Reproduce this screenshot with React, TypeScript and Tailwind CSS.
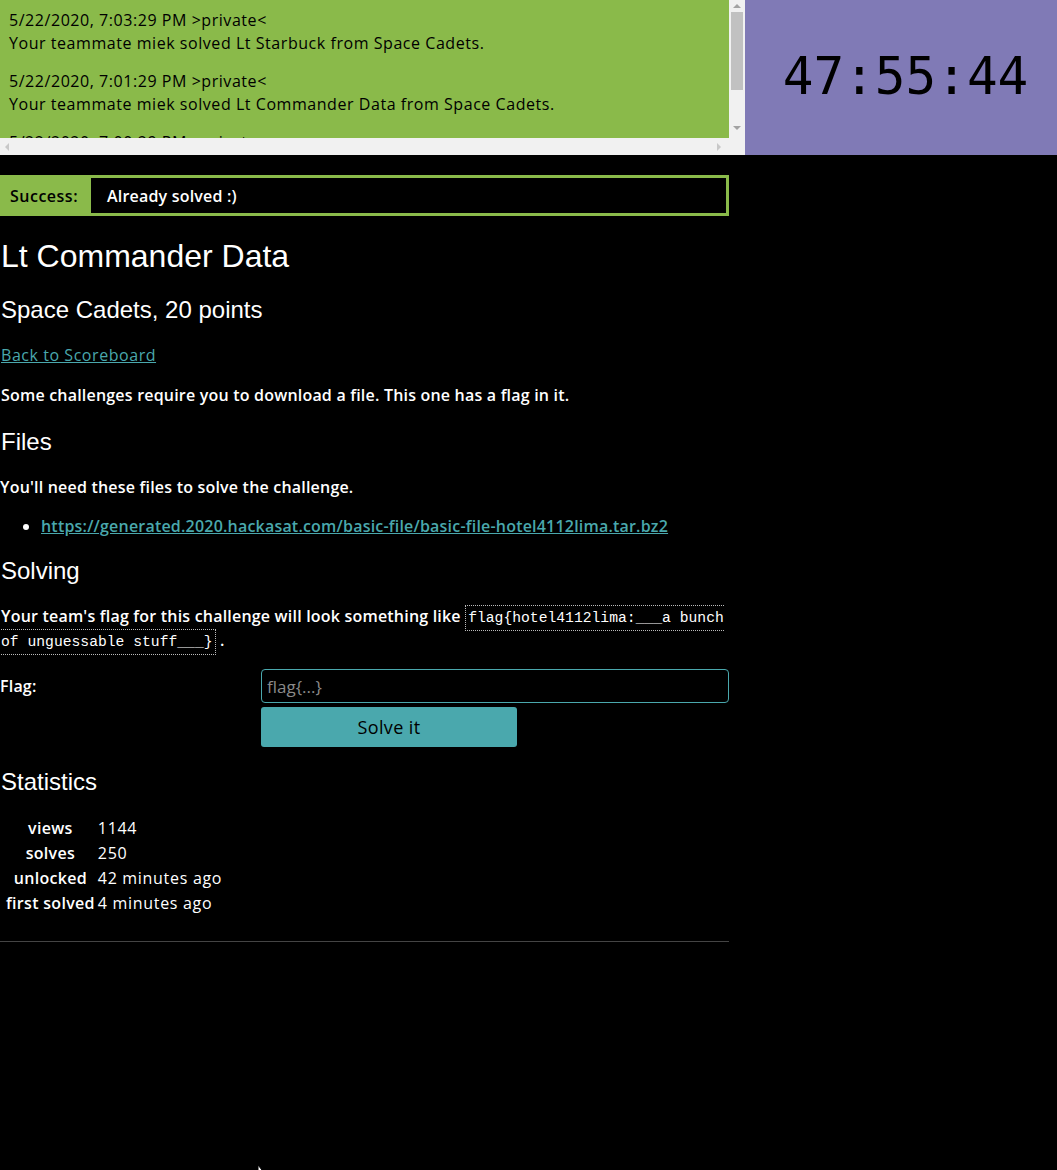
import React from "react";

const BODY = { fontFamily: "'Open Sans', Lato, sans-serif" };
const HEAD = { fontFamily: "'Liberation Sans', Arial, sans-serif" };

const messages = [
  { when: "5/22/2020, 7:03:29 PM", text: "Your teammate miek solved Lt Starbuck from Space Cadets." },
  { when: "5/22/2020, 7:01:29 PM", text: "Your teammate miek solved Lt Commander Data from Space Cadets." },
  { when: "5/22/2020, 7:00:29 PM", text: "Your teammate miek solved Basic File from Space Cadets." },
];

const stats = [
  ["views", "1144"],
  ["solves", "250"],
  ["unlocked", "42 minutes ago"],
  ["first solved", "4 minutes ago"],
];

// ── top bar: message log + countdown ──
function TopBar() {
  return (
    <div className="flex h-[155px]">
      <div className="relative w-[745px] h-[155px] bg-[#f1f1f1]">
        <div className="absolute left-0 top-0 w-[729px] h-[138px] overflow-hidden bg-[#8aba4a] text-black text-[16px] leading-[23px] tracking-[0.55px]">
          <div className="pt-[9px] pl-[9px]">
            {messages.map((m) => (
              <div key={m.when} className="mb-[15px]">
                <div>{m.when} &gt;private&lt;</div>
                <div>{m.text}</div>
              </div>
            ))}
          </div>
        </div>
        {/* vertical scrollbar */}
        <div className="absolute left-[729px] top-0 w-[16px] h-[138px] bg-[#f1f1f1]">
          <div className="absolute left-[4px] top-[4px] w-0 h-0 border-x-[4px] border-x-transparent border-b-[4px] border-b-[#a3a3a3]" />
          <div className="absolute left-[2px] top-[12px] w-[12px] h-[78px] bg-[#c1c1c1]" />
          <div className="absolute left-[4px] top-[126px] w-0 h-0 border-x-[4px] border-x-transparent border-t-[4px] border-t-[#a3a3a3]" />
        </div>
        {/* horizontal scrollbar */}
        <div className="absolute left-0 top-[138px] w-[729px] h-[17px] bg-[#f1f1f1]">
          <div className="absolute left-[5px] top-[5px] w-0 h-0 border-y-[4px] border-y-transparent border-r-[4px] border-r-[#c8c8c8]" />
          <div className="absolute left-[717px] top-[5px] w-0 h-0 border-y-[4px] border-y-transparent border-l-[4px] border-l-[#c8c8c8]" />
        </div>
      </div>
      <div className="flex-1 bg-[#807ab6] flex items-center justify-center pl-[9px]">
        <span className="text-[51px] text-black" style={{ fontFamily: "'DejaVu Sans Mono', monospace" }}>
          47:55:44
        </span>
      </div>
    </div>
  );
}

export default function App() {
  return (
    <div className="relative min-h-[1170px] overflow-hidden bg-black text-white" style={BODY}>
      <TopBar />

      <div className="w-[729px] pt-[20px]">
        {/* alert */}
        <div className="flex h-[41px] border-[3px] border-[#8aba4a] bg-black">
          <div className="w-[88px] bg-[#8aba4a] flex items-center pl-[7px] text-[16px] font-semibold tracking-[0.5px] text-black">
            Success:
          </div>
          <div className="flex items-center pl-[16px] text-[16px] font-semibold tracking-[0.2px] text-white">
            Already solved :)
          </div>
        </div>

        <h1 className="mt-[22px] pl-[1px] text-[32px] leading-[37px]" style={HEAD}>
          Lt Commander Data
        </h1>
        <h2 className="mt-[21px] pl-[1px] text-[24px] leading-[28px]" style={HEAD}>
          Space Cadets, 20 points
        </h2>

        <p className="mt-[20px] pl-[1px] text-[16px] leading-[22px] tracking-[0.55px]">
          <a href="#" className="text-[#4aa8ad] underline">Back to Scoreboard</a>
        </p>
        <p className="mt-[18px] pl-[1px] text-[16px] leading-[22px] font-semibold tracking-[0.2px]">
          Some challenges require you to download a file. This one has a flag in it.
        </p>

        <h2 className="mt-[22px] pl-[1px] text-[24px] leading-[28px]" style={HEAD}>
          Files
        </h2>
        <p className="mt-[20px] text-[16px] leading-[22px] font-semibold tracking-[0.2px]">
          You'll need these files to solve the challenge.
        </p>
        <ul className="mt-[17px] pl-[41px] list-disc text-[16px] leading-[22px] font-semibold tracking-[0.2px]">
          <li>
            <a href="#" className="text-[#4aa8ad] underline">
              https://generated.2020.hackasat.com/basic-file/basic-file-hotel4112lima.tar.bz2
            </a>
          </li>
        </ul>

        <h2 className="mt-[20px] pl-[1px] text-[24px] leading-[28px]" style={HEAD}>
          Solving
        </h2>
        <p className="mt-[19px] pl-[1px] text-[16px] leading-[24px] font-semibold tracking-[0.2px]">
          Your team's flag for this challenge will look something like{" "}
          <code
            className="border border-dotted border-[#bbbbbb] px-[2px] py-[4px] text-[14.7px] leading-[16px] font-normal tracking-normal"
            style={{ fontFamily: "'Liberation Mono', monospace" }}
          >
            flag{"{"}hotel4112lima:___a bunch of unguessable stuff___{"}"}
          </code>{" "}
          .
        </p>

        {/* flag form */}
        <div className="mt-[17px] flex">
          <label className="w-[261px] pt-[6px] text-[16px] leading-[22px] font-semibold tracking-[0.2px]">Flag:</label>
          <div className="flex-1 flex flex-col gap-[4px]">
            <input
              placeholder="flag{...}"
              className="h-[34px] w-full rounded-[4px] border border-[#4aa8ad] bg-black px-[5px] text-[17px] text-white placeholder:text-[#8a8a8a] outline-none"
              style={BODY}
            />
            <button
              className="h-[40px] w-[256px] rounded-[3px] bg-[#4aa8ad] text-[18px] tracking-[0.4px] text-black"
              style={BODY}
            >
              Solve it
            </button>
          </div>
        </div>

        <h2 className="mt-[21px] pl-[1px] text-[24px] leading-[28px]" style={HEAD}>
          Statistics
        </h2>
        <table className="mt-[19px] ml-[4px] text-[16px] leading-[21px] border-separate border-spacing-[2px]">
          <tbody>
            {stats.map(([k, v]) => (
              <tr key={k} className="h-[23px]">
                <th className="text-center font-semibold tracking-[0.3px] px-0">{k}</th>
                <td className="font-normal tracking-[0.7px] pl-[1px]">{v}</td>
              </tr>
            ))}
          </tbody>
        </table>

        <hr className="mt-[24px] border-t border-[#444444]" />
      </div>

      {/* mouse pointer at the bottom edge */}
      <svg className="absolute left-[257px] top-[1164px]" width="10" height="16" viewBox="0 0 10 16">
        <path d="M1 1 L1 14 L4 11 L9 11 Z" fill="#ffffff" stroke="#000000" strokeWidth="1" />
      </svg>
    </div>
  );
}
